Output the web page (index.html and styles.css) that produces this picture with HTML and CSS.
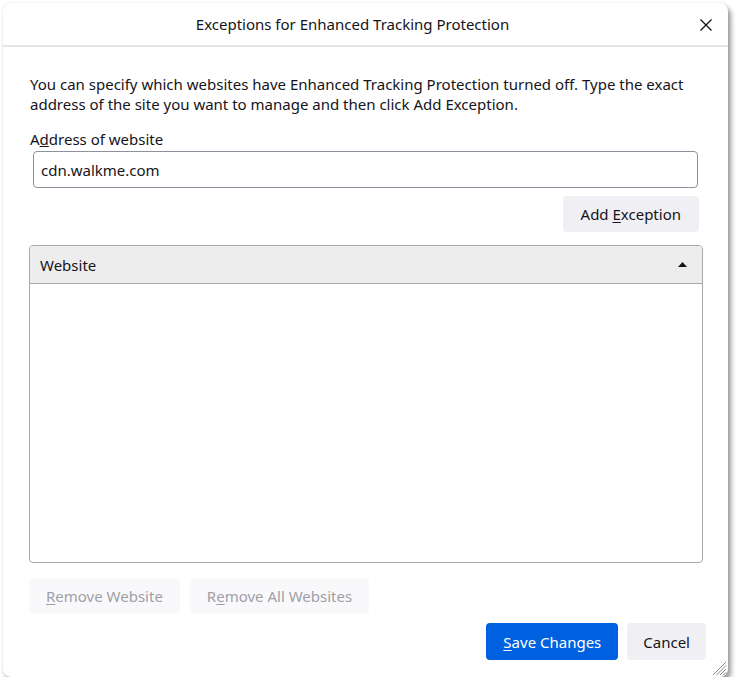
FILE: index.html
```html
<!DOCTYPE html>
<html lang="en">
<head>
    <meta charset="UTF-8">
    <meta name="viewport" content="width=device-width, initial-scale=1.0">
    <title>Exceptions for Enhanced Tracking Protection</title>
    <link rel="stylesheet" href="styles.css">
</head>
<body>
    <div class="dialog">
        <div class="titlebar">
            <span class="title">Exceptions for Enhanced Tracking Protection</span>
            <button class="close" aria-label="Close">
                <svg width="14" height="14" viewBox="0 0 14 14">
                    <path d="M1.5 1.5 L12.5 12.5 M12.5 1.5 L1.5 12.5" stroke="#15141a" stroke-width="1.3" fill="none"/>
                </svg>
            </button>
        </div>

        <div class="content">
            <p class="intro">You can specify which websites have Enhanced Tracking Protection turned off. Type the exact address of the site you want to manage and then click Add Exception.</p>

            <label for="url" class="field-label">A<u>d</u>dress of website</label>
            <input type="text" id="url" class="url-input" value="cdn.walkme.com">

            <div class="add-row">
                <button class="btn btn-add">Add <u>E</u>xception</button>
            </div>

            <div class="site-list">
                <div class="list-header">
                    <span>Website</span>
                    <svg class="sort-arrow" width="9" height="5" viewBox="0 0 9 5">
                        <path d="M0 5 L4.5 0 L9 5 Z" fill="#15141a"/>
                    </svg>
                </div>
                <div class="list-body"></div>
            </div>

            <div class="remove-row">
                <button class="btn btn-disabled"><u>R</u>emove Website</button>
                <button class="btn btn-disabled">R<u>e</u>move All Websites</button>
            </div>

            <div class="footer">
                <button class="btn btn-primary"><u>S</u>ave Changes</button>
                <button class="btn">Cancel</button>
            </div>
        </div>

        <svg class="grip" width="17" height="17" viewBox="0 0 17 17">
            <path d="M16 3 L3 16 M16 6.5 L6.5 16 M16 10 L10 16 M16 13.5 L13.5 16" stroke="#8a8a8a" stroke-width="1" fill="none"/>
        </svg>
    </div>
</body>
</html>
```

FILE: styles.css
```css
body {
    margin: 0;
    padding: 3px 0 0 3px;
    background-color: #fff;
    font-family: 'Noto Sans', 'Open Sans', sans-serif;
    font-size: 15px;
    color: #15141a;
}
.dialog {
    position: relative;
    width: 725px;
    height: 674px;
    background-color: #fff;
    border-radius: 8px;
    box-shadow: 3px 4px 5px rgba(0, 0, 0, 0.4), 0 0 2px rgba(0, 0, 0, 0.12);
    display: flex;
    flex-direction: column;
}
.titlebar {
    height: 42px;
    border-bottom: 2px solid #e4e4e4;
    display: flex;
    align-items: center;
    justify-content: center;
    padding-right: 26px;
}
.title {
    font-size: 15px;
}
.close {
    position: absolute;
    top: 15px;
    right: 15px;
    width: 14px;
    height: 14px;
    padding: 0;
    border: none;
    background: none;
    display: flex;
}
.content {
    padding: 27px 25px 0 26px;
    display: flex;
    flex-direction: column;
}
.intro {
    margin: 0 0 15px 1px;
    line-height: 20px;
}
.field-label {
    display: block;
    margin-left: 1px;
    line-height: 20px;
    margin-bottom: 2px;
}
.url-input {
    margin: 0 5px 0 4px;
    height: 37px;
    box-sizing: border-box;
    border: 1px solid #8f8f9d;
    border-radius: 4px;
    padding: 0 7px;
    font-family: inherit;
    font-size: 15px;
    color: #15141a;
}
.add-row {
    display: flex;
    justify-content: flex-end;
    margin: 8px 4px 13px 0;
}
.btn {
    height: 36px;
    padding: 0 16px;
    border: none;
    border-radius: 4px;
    background-color: #f0f0f4;
    font-family: inherit;
    font-size: 15px;
    color: #15141a;
}
.btn-add {
    padding: 0 18px;
}
.btn u {
    text-underline-offset: 2px;
}
.site-list {
    border: 1px solid #a8a8ae;
    border-radius: 4px;
    height: 318px;
    box-sizing: border-box;
    display: flex;
    flex-direction: column;
    overflow: hidden;
}
.list-header {
    height: 37px;
    background-color: #ededed;
    border-bottom: 1px solid #a8a8ae;
    display: flex;
    align-items: center;
    justify-content: space-between;
    padding: 0 15px 0 10px;
}
.list-body {
    flex: 1;
}
.remove-row {
    display: flex;
    gap: 10px;
    margin-top: 15px;
}
.btn-disabled {
    padding: 0 17px;
    background-color: #f9f9fb;
    color: #9f9fa6;
}
.footer {
    display: flex;
    justify-content: flex-end;
    gap: 9px;
    margin: 9px -3px 0 0;
}
.btn-primary {
    padding: 0 17px;
    background-color: #0061e0;
    color: #fff;
}
.footer .btn {
    height: 37px;
}
.grip {
    position: absolute;
    right: 1px;
    bottom: 1px;
}
```
